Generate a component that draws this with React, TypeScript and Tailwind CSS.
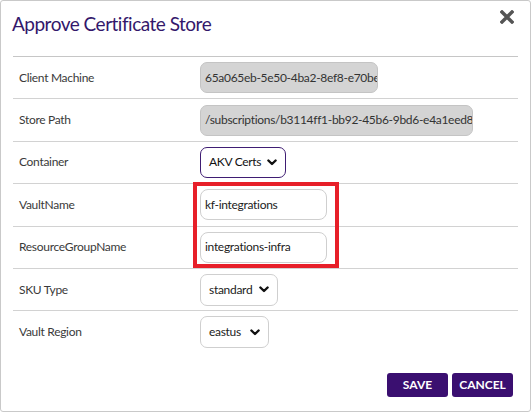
import React from 'react';

const Chevron: React.FC = () => (
  <svg width="10" height="7" viewBox="0 0 10 7" className="shrink-0">
    <polyline points="1.4,1.5 5,5 8.6,1.5" fill="none" stroke="#111" strokeWidth="2.4" strokeLinecap="round" strokeLinejoin="round" />
  </svg>
);

const rows = [
  { label: 'Client Machine', kind: 'readonly', value: '65a065eb-5e50-4ba2-8ef8-e70be1a2c3d4', width: 'w-[178px]' },
  { label: 'Store Path', kind: 'readonly', value: '/subscriptions/b3114ff1-bb92-45b6-9bd6-e4a1eed8c9f0/resourceGroups', width: 'w-[273px]' },
  { label: 'Container', kind: 'container', value: 'AKV Certs', width: 'w-[86px]' },
  { label: 'VaultName', kind: 'text', value: 'kf-integrations', width: 'w-[127px]' },
  { label: 'ResourceGroupName', kind: 'text', value: 'integrations-infra', width: 'w-[127px]' },
  { label: 'SKU Type', kind: 'select', value: 'standard', width: 'w-[78px]' },
  { label: 'Vault Region', kind: 'select', value: 'eastus', width: 'w-[69px]' },
];

export default function App() {
  return (
    <div className="w-[531px] h-[412px] bg-white" style={{ fontFamily: 'Lato, "Liberation Sans", sans-serif' }}>
      <div className="relative w-[531px] h-[412px] border border-[#c9c9c9] rounded-[3px] flex flex-col">
        <div className="flex items-start justify-between h-[55px] px-[11px] pt-[10px]">
          <h1 className="text-[19px] text-[#33186b] leading-[26px] tracking-[-0.5px]">Approve Certificate Store</h1>
          <svg width="14" height="14" viewBox="0 0 14 14" className="mt-[-1px] mr-[5px]">
            <path d="M2 2 L12 12 M12 2 L2 12" stroke="#555" strokeWidth="3.4" strokeLinecap="square" />
          </svg>
        </div>

        <div className="mx-[12px] flex flex-col">
          {rows.map((r, i) => (
            <div key={r.label} className={`h-[42.4px] flex items-center ${i === 0 ? 'border-t border-[#c6c6c6]' : 'border-t border-[#d2d2d2]'}`}>
              <div className="w-[187px] pl-[6px] text-[12px] tracking-[-0.3px] text-[#3a3a3a]">{r.label}</div>
              {r.kind === 'readonly' && (
                <div className={`${r.width} h-[31px] rounded-[7px] bg-[#d4d4d4] border border-[#c4c4c4] px-[4px] flex items-center overflow-hidden whitespace-nowrap text-[12px] tracking-[-0.3px] text-[#333]`}>
                  {r.value}
                </div>
              )}
              {r.kind === 'container' && (
                <div className={`${r.width} h-[31px] rounded-[7px] bg-white border border-[#3f1d73] pl-[8px] pr-[8px] flex items-center justify-between whitespace-nowrap text-[12px] tracking-[-0.3px] text-[#111]`}>
                  <span>{r.value}</span>
                  <Chevron />
                </div>
              )}
              {r.kind === 'text' && (
                <div className={`${r.width} h-[31px] rounded-[8px] bg-white border border-[#cfcfcf] px-[4px] flex items-center text-[12px] tracking-[-0.3px] text-[#222]`}>
                  {r.value}
                </div>
              )}
              {r.kind === 'select' && (
                <div className={`${r.width} h-[32px] rounded-[7px] bg-white border border-[#cfcfcf] pl-[8px] pr-[8px] flex items-center justify-between whitespace-nowrap text-[12px] tracking-[-0.3px] text-[#222]`}>
                  <span>{r.value}</span>
                  <Chevron />
                </div>
              )}
            </div>
          ))}
        </div>

        <div className="flex justify-end gap-[4px] pr-[17px] mt-[20px]">
          <button className="w-[61px] h-[24px] rounded-[3px] bg-[#3a0f70] text-white text-[12px] font-bold">SAVE</button>
          <button className="w-[61px] h-[24px] rounded-[3px] bg-[#3a0f70] text-white text-[12px] font-bold">CANCEL</button>
        </div>

        <div className="absolute left-[192px] top-[181px] w-[146px] h-[86px] border-[4px] border-[#e71f29] pointer-events-none" />
      </div>
    </div>
  );
}
